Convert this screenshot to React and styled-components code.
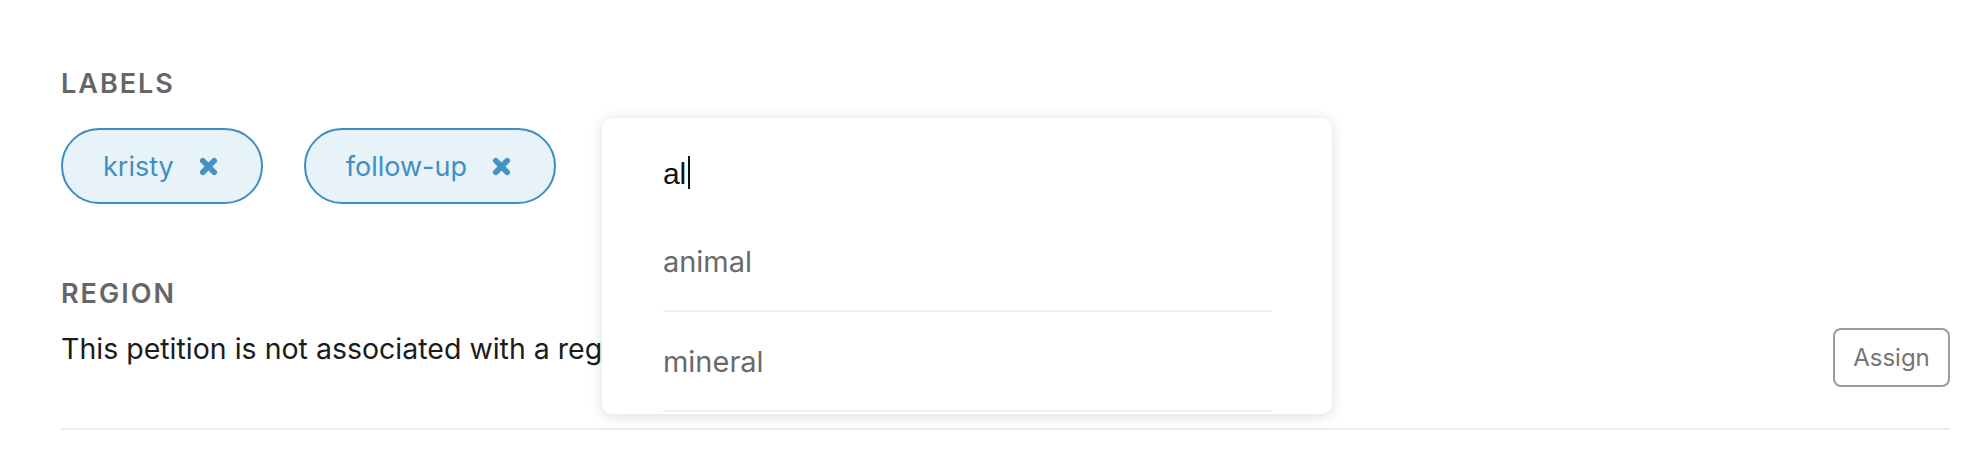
import React from "react";
import styled, { createGlobalStyle } from "styled-components";

const GlobalStyle = createGlobalStyle`
  body {
    margin: 0;
    background: #fff;
    font-family: "Inter", "Noto Sans", sans-serif;
  }
`;

const Page = styled.div`
  padding: 68px 28px 0 61px;
`;

const SectionTitle = styled.h3`
  margin: ${(p) => p.$top || 0}px 0 0;
  font-size: 27px;
  line-height: 32px;
  font-weight: 600;
  letter-spacing: 2px;
  color: #666;
`;

const LabelsRow = styled.div`
  display: flex;
  align-items: center;
  gap: 41px;
  margin-top: 28px;
`;

const Chip = styled.div`
  box-sizing: border-box;
  display: inline-flex;
  align-items: center;
  gap: 25px;
  height: 76px;
  padding: 0 43px 0 40px;
  border: 2px solid #3d8ec2;
  border-radius: 40px;
  background: #e8f3f9;
  color: #3f8fc3;
  font-size: 27px;
`;

const RemoveIcon = styled.svg`
  width: 19px;
  height: 19px;
  flex: none;
`;

const MenuAnchor = styled.div`
  position: relative;
  align-self: flex-start;
  margin-left: 5px;
  width: 1px;
  height: 1px;
`;

const Popup = styled.div`
  position: absolute;
  top: -10px;
  left: 0;
  width: 730px;
  height: 296px;
  box-sizing: border-box;
  overflow: hidden;
  background: #fff;
  border-radius: 10px;
  box-shadow: 0 2px 14px rgba(0, 0, 0, 0.14);
  z-index: 2;
`;

const InputRow = styled.div`
  padding: 36px 61px 18px;
  font-family: "Liberation Sans", Arial, sans-serif;
  font-size: 30px;
  line-height: 40px;
  color: #111;
`;

const Caret = styled.span`
  display: inline-block;
  width: 2px;
  height: 33px;
  margin-left: 2px;
  vertical-align: -5px;
  background: #111;
`;

const OptionList = styled.ul`
  list-style: none;
  margin: 0 60px 0 61px;
  padding: 0;
`;

const Option = styled.li`
  display: flex;
  align-items: center;
  height: 98px;
  border-bottom: 2px solid #f1f1f1;
  font-size: 29px;
  color: #6a6a6a;
`;

const RegionRow = styled.div`
  display: flex;
  justify-content: space-between;
  align-items: flex-start;
  margin-top: 18px;
`;

const RegionText = styled.p`
  margin: 1px 0 0;
  font-size: 28.5px;
  line-height: 40px;
  color: #1c1c1c;
`;

const OutlineButton = styled.button`
  box-sizing: border-box;
  width: 117px;
  height: 59px;
  border: 2px solid #9c9c9c;
  border-radius: 8px;
  background: #fff;
  color: #757575;
  font-family: "Inter", sans-serif;
  font-size: 24px;
`;

const Divider = styled.hr`
  margin: 41px 0 0;
  border: 0;
  border-top: 2px solid #ececec;
`;

function XMark() {
  return (
    <RemoveIcon viewBox="0 0 20 20">
      <g stroke="#4592c4" strokeWidth="6" strokeLinecap="round">
        <line x1="4" y1="4" x2="16" y2="16" />
        <line x1="16" y1="4" x2="4" y2="16" />
      </g>
    </RemoveIcon>
  );
}

const labels = ["kristy", "follow-up"];
const options = ["animal", "mineral"];

export default function App() {
  return (
    <>
      <GlobalStyle />
      <Page>
        <SectionTitle>LABELS</SectionTitle>
        <LabelsRow>
          {labels.map((l) => (
            <Chip key={l}>
              {l}
              <XMark />
            </Chip>
          ))}
          <MenuAnchor>
            <Popup>
              <InputRow>
                al<Caret />
              </InputRow>
              <OptionList>
                {options.map((o) => (
                  <Option key={o}>{o}</Option>
                ))}
              </OptionList>
            </Popup>
          </MenuAnchor>
        </LabelsRow>

        <SectionTitle $top={74}>REGION</SectionTitle>
        <RegionRow>
          <RegionText>This petition is not associated with a region.</RegionText>
          <OutlineButton>Assign</OutlineButton>
        </RegionRow>
        <Divider />
      </Page>
    </>
  );
}
